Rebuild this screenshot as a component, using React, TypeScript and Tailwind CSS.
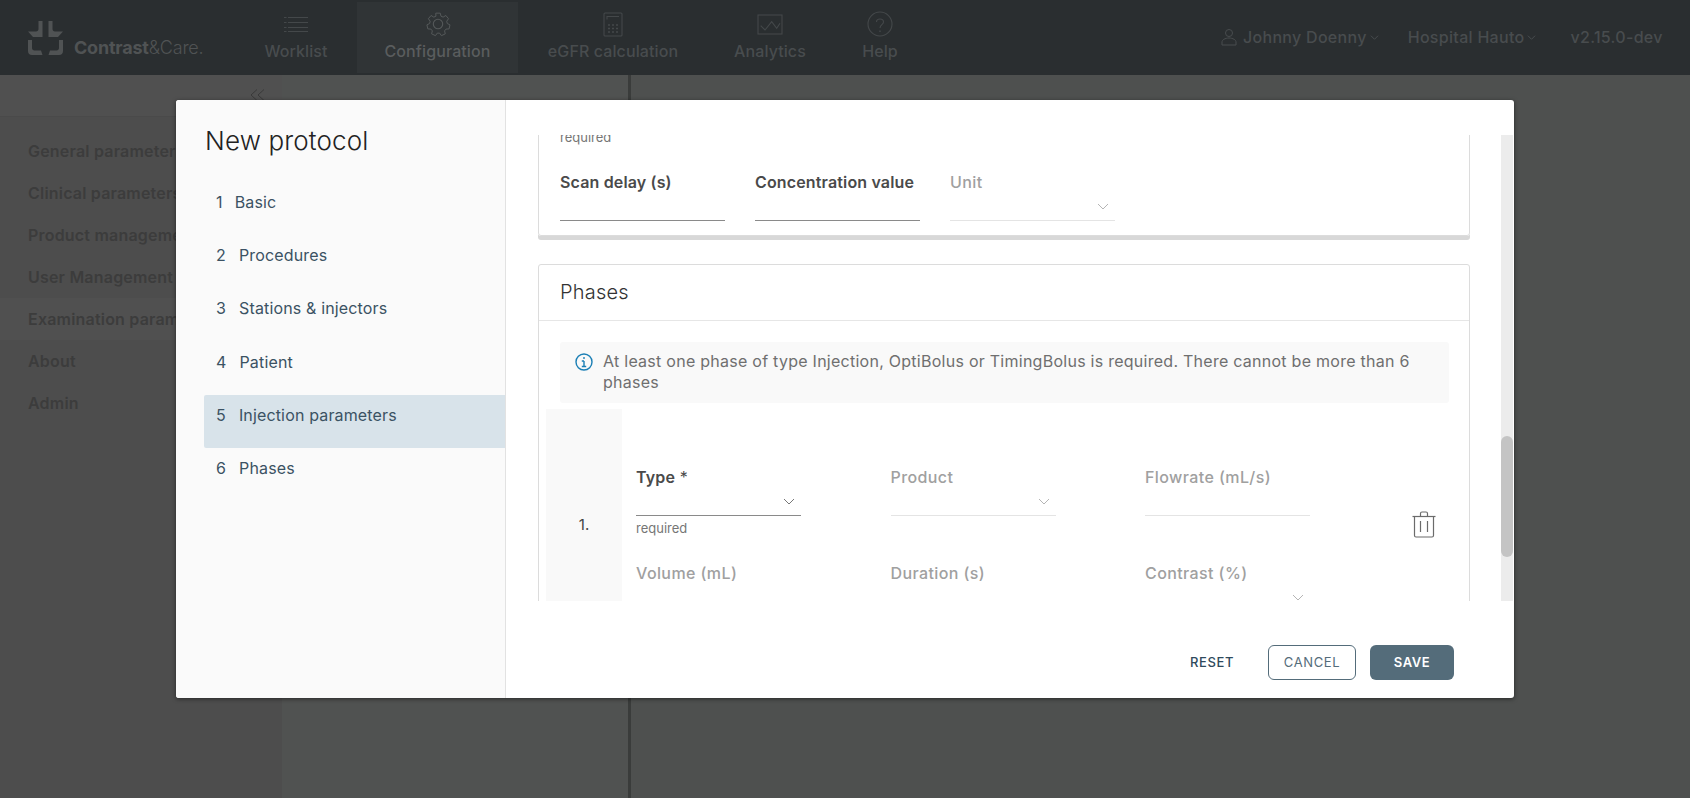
import React from "react";

const font = "font-['Inter','Liberation_Sans',sans-serif]";

const sideItems = [
  "General parameters",
  "Clinical parameters",
  "Product management",
  "User Management",
  "Examination parameters",
  "About",
  "Admin",
];

const steps = [
  { n: 1, label: "Basic", gap: "ml-[12px]", pad: "pt-[9px]" },
  { n: 2, label: "Procedures", gap: "ml-[13px]", pad: "pt-[9px]" },
  { n: 3, label: "Stations & injectors", gap: "ml-[13px]", pad: "pt-[9px]" },
  { n: 4, label: "Patient", gap: "ml-[13px]", pad: "pt-[10px]" },
  { n: 5, label: "Injection parameters", gap: "ml-[13px]", pad: "pt-[10px]", active: true },
  { n: 6, label: "Phases", gap: "ml-[13px]", pad: "pt-[10px]" },
];

function Chevron({ className }: { className?: string }) {
  return (
    <svg viewBox="0 0 12 7" className={className} fill="none" stroke="currentColor" strokeWidth="1">
      <path d="M1 1l5 5 5-5" />
    </svg>
  );
}

function LogoMark() {
  return (
    <svg viewBox="0 0 35 34" className="w-[35px] h-[34px] shrink-0" fill="#505354">
      <path d="M10.500 0h4v16H5L0 10.500h8c1.500 0 2.500-1 2.500-2.500z" />
      <path d="M24.500 0h-4v16H30l5-5.500h-8c-1.500 0-2.500-1-2.500-2.500z" />
      <path d="M0 19h4v8c0 1.500 1 2.500 2.500 2.500H13l1.500 4.500H4c-2.500 0-4-1.500-4-4z" />
      <path d="M35 19h-4v8c0 1.500-1 2.500-2.500 2.500H22L20.500 34H31c2.500 0 4-1.500 4-4z" />
    </svg>
  );
}

function NavIcon({ name }: { name: string }) {
  const cls = "w-[28px] h-[26px]";
  if (name === "list")
    return (
      <svg viewBox="0 0 28 26" className={cls} fill="none" stroke="#44484a" strokeWidth="1.200">
        <path d="M2 6.500h2.500M6 6.500h20M2 11.500h2.500M6 11.500h20M2 16.500h2.500M6 16.500h20M2 20.500h2.500M6 20.500h20" />
      </svg>
    );
  if (name === "cog")
    return (
      <svg viewBox="0 0 28 26" className={cls} fill="none" stroke="#55595a" strokeWidth="1.100">
        <path d="M11.500 1.500h5l.8 3.400 2.400 1 3-1.800 3 3.600-2 2.800.6 2.500 3 1.500-1 4.500-3.400.2-1.600 2 .8 3.300-4.300 2-2-2.800h-2.600l-2 2.800-4.300-2 .8-3.300-1.600-2-3.400-.2-1-4.500 3-1.500.6-2.500-2-2.800 3-3.600 3 1.800 2.400-1z" transform="translate(1.400 0.800) scale(0.9)" />
        <circle cx="14" cy="13" r="4.700" />
      </svg>
    );
  if (name === "calc")
    return (
      <svg viewBox="0 0 28 26" className={cls} fill="none" stroke="#44484a" strokeWidth="1.100">
        <rect x="5" y="2" width="18" height="23" rx="1" />
        <path d="M8 8.500V5.500h12" />
        <path d="M9 14h2M13 14h2M17 14h2M9 17.500h2M13 17.500h2M17 17.500h2M9 21h2M13 21h2M17 21h2" strokeWidth="1.500" />
      </svg>
    );
  if (name === "chart")
    return (
      <svg viewBox="0 0 28 26" className={cls} fill="none" stroke="#44484a" strokeWidth="1.100">
        <rect x="2" y="4" width="24" height="19" />
        <path d="M4.700 14.700L9 19l6.700-8.300 5 6.600 3.300-5" />
      </svg>
    );
  return (
    <svg viewBox="0 0 28 26" className={cls} fill="none" stroke="#44484a" strokeWidth="1.100">
      <circle cx="14" cy="13" r="12" />
      <path d="M10.500 11c0-1.800 1.500-3 3.500-3s3.500 1.200 3.500 3c0 2.600-3.500 2.800-3.500 6" />
      <path d="M14 19.500v1.500" strokeWidth="1.400" />
    </svg>
  );
}

function NavTab({ icon, label, active, className }: { icon: string; label: string; active?: boolean; className: string }) {
  return (
    <div className={`flex flex-col items-center pt-[9px] h-[71px] mt-[2px] ${className} ${active ? "bg-[#303436] text-[#5a5d5e]" : "text-[#484c4e]"}`}>
      <NavIcon name={icon} />
      <span className="text-[16px] leading-[20px] font-medium tracking-[0.1px] mt-[4px] whitespace-nowrap">{label}</span>
    </div>
  );
}

function Header() {
  return (
    <header className="h-[75px] bg-[#2a2e30] flex shrink-0">
      <div className="flex items-end pl-[28px] pb-[20px] w-[250px] shrink-0">
        <LogoMark />
        <span className="ml-[11px] -mb-[2px] text-[18px] leading-[18px] tracking-[-0.2px] text-[#505354] whitespace-nowrap">
          <span className="font-bold">Contrast</span>
          <span className="font-light">&amp;Care.</span>
        </span>
      </div>
      <NavTab icon="list" label="Worklist" className="w-[92px]" />
      <NavTab icon="cog" label="Configuration" active className="w-[161px] ml-[15px]" />
      <NavTab icon="calc" label="eGFR calculation" className="w-[190px]" />
      <NavTab icon="chart" label="Analytics" className="w-[124px]" />
      <NavTab icon="help" label="Help" className="w-[96px]" />
      <div className="flex-1 flex items-center pl-[293px] pb-[1px] text-[16px] font-medium tracking-[0.3px] text-[#484c4e] whitespace-nowrap">
        <svg viewBox="0 0 16 18" className="w-[16px] h-[18px]" fill="none" stroke="#484c4e" strokeWidth="1">
          <circle cx="8" cy="5" r="3.500" />
          <path d="M1 17v-3c0-2 3-4 7-4s7 2 7 4v3z" />
        </svg>
        <span className="ml-[6px]">Johnny Doenny</span>
        <Chevron className="w-[9px] h-[5px] ml-[3px] text-[#55595b]" />
        <span className="ml-[29px]">Hospital Hauto</span>
        <Chevron className="w-[9px] h-[5px] ml-[2px] text-[#55595b]" />
        <span className="ml-[35px]">v2.15.0-dev</span>
      </div>
    </header>
  );
}

function Field({ label, disabled, select, helper, mark }: { label: string; disabled?: boolean; select?: boolean; helper?: string; mark?: boolean }) {
  return (
    <div className="w-[165px]">
      <div className={`h-5 text-[16px] leading-5 whitespace-nowrap ${disabled ? "font-medium tracking-[0.4px] text-[#a0a0a0]" : "font-semibold tracking-[0.15px] text-[#4a4a4a]"}`}>
        {label}
        {mark && <span className="font-normal"> *</span>}
      </div>
      <div className={`h-[29px] border-b flex items-center justify-end pr-[6px] ${disabled ? "border-[#e4e4e4] text-[#b5b5b5]" : "border-[#8a8a8a] text-[#777]"}`}>
        {select && <Chevron className="w-[12px] h-[7px]" />}
      </div>
      {helper && <div className="mt-[4px] h-4 text-[13px] leading-4 text-[#767676]">{helper}</div>}
    </div>
  );
}

function TrashIcon() {
  return (
    <svg viewBox="0 0 24 27" className="w-[24px] h-[27px]" fill="none" stroke="#6b6b6b" strokeWidth="1.200">
      <path d="M0.500 5.500h23" />
      <path d="M8.500 5V2.500c0-.8.500-1.500 1.500-1.500h4c1 0 1.500.7 1.500 1.500V5" />
      <path d="M2.500 6v18.500c0 1 .7 1.500 1.500 1.500h16c.8 0 1.500-.5 1.500-1.500V6" />
      <path d="M8.500 10v11M15.500 10v11" />
    </svg>
  );
}

function Modal() {
  return (
    <div className="absolute left-[176px] top-[100px] w-[1338px] h-[598px] bg-white rounded-[3px] shadow-[0_1px_4px_rgba(0,0,0,0.5)] flex overflow-hidden">
      {/* Steps */}
      <div className="w-[330px] shrink-0 bg-[#fafafa] border-r border-[#e2e2e2] pl-[28px]">
        <h2 className="pt-[25px] pl-[1px] text-[26px] leading-[32px] font-light tracking-[0.15px] text-[#222] whitespace-nowrap">New protocol</h2>
        <div className="mt-[26px]">
          {steps.map((s) => (
            <div
              key={s.n}
              className={`h-[53px] pl-[12px] ${s.pad} text-[16px] leading-[20px] tracking-[0.15px] text-[#3b5263] rounded-l-[2px] ${s.active ? "bg-[#d8e3ea]" : ""}`}
            >
              {s.n}
              <span className={s.gap}>{s.label}</span>
            </div>
          ))}
        </div>
      </div>

      {/* Form */}
      <div className="flex-1 flex flex-col min-w-0">
        <div className="h-[35px] shrink-0" />
        <div className="h-[466px] flex overflow-hidden">
          <div className="flex-1 pl-[32px] pr-[31px] min-w-0">
            <div className="-mt-[7px] border border-[#dcdcdc] rounded-[3px] shadow-[0_4px_0_#d8d8d8] pl-[21px] pb-[14px]">
              <div className="h-4 text-[13px] leading-4 text-[#767676] mb-[27px]">required</div>
              <div className="flex gap-x-[30px]">
                <Field label="Scan delay (s)" />
                <Field label="Concentration value" />
                <Field label="Unit" disabled select />
              </div>
            </div>

            <div className="mt-[28px] border border-[#dcdcdc] rounded-[3px]">
              <div className="h-[56px] border-b border-[#e6e6e6] pl-[21px] pb-[2px] flex items-center text-[20px] font-light tracking-[0.2px] text-[#333]">Phases</div>
              <div className="ml-[21px] mr-[20px] mt-[21px] h-[61px] rounded-[3px] bg-[#f9f9f9] flex pl-[15px] pt-[9px] pr-[20px]">
                <svg viewBox="0 0 18 18" className="w-[18px] h-[18px] shrink-0 mt-[2px]" fill="none" stroke="#1b7fb5" strokeWidth="1.400">
                  <circle cx="9" cy="9" r="8" />
                  <path d="M9 8v5.500M6.800 8H9M6.800 13.500h4.400" />
                  <path d="M9 4.200v1.600" strokeWidth="1.800" />
                </svg>
                <p className="ml-[10px] text-[16px] leading-[21px] tracking-[0.26px] text-[#6f6f6f]">
                  At least one phase of type Injection, OptiBolus or TimingBolus is required. There cannot be more than 6 phases
                </p>
              </div>
              <div className="mt-[6px] flex items-stretch h-[300px]">
                <div className="ml-[7px] w-[76px] shrink-0 bg-[#f9f9f9] flex justify-center pt-[106px] text-[15px] leading-5 text-[#444]">1.</div>
                <div className="ml-[14px] pt-[58px] grid grid-cols-[165px_165px_165px] gap-x-[89.500px] auto-rows-[96px]">
                  <Field label="Type" mark select helper="required" />
                  <Field label="Product" disabled select />
                  <Field label="Flowrate (mL/s)" disabled />
                  <Field label="Volume (mL)" disabled />
                  <Field label="Duration (s)" disabled />
                  <Field label="Contrast (%)" disabled select />
                </div>
                <div className="ml-[102px] pt-[102px]">
                  <TrashIcon />
                </div>
              </div>
            </div>
          </div>
          {/* Scrollbar */}
          <div className="w-[12px] shrink-0 mr-[1px] bg-[#ececec] pt-[301px]">
            <div className="h-[121px] rounded-[6px] bg-[#c4c4c4]" />
          </div>
        </div>
        <div className="flex-1 flex items-start justify-end pr-[60px] pt-[44px]">
          <button className="text-[13px] leading-[35px] font-medium tracking-[0.6px] text-[#2f4a5c] mr-[34px]">RESET</button>
          <button className="w-[88px] h-[35px] pt-[1px] rounded-[6px] border border-[#546c7a] text-[13px] tracking-[0.6px] text-[#546c7a]">CANCEL</button>
          <button className="w-[84px] h-[35px] ml-[14px] rounded-[6px] bg-[#546c7a] text-[13px] font-semibold tracking-[0.6px] text-white">SAVE</button>
        </div>
      </div>
    </div>
  );
}

export default function App() {
  return (
    <div className={`relative w-[1690px] h-[798px] overflow-hidden flex flex-col bg-[#4e504f] ${font}`}>
      <Header />
      <div className="flex-1 flex min-h-0">
        {/* Sidebar behind dialog */}
        <aside className="w-[282px] shrink-0 bg-[#4d4d4d]">
          <div className="h-[42px] bg-[#505050] border-b border-[#4a4a4a] flex justify-end items-start pt-[14px] pr-[17px]">
            <svg viewBox="0 0 15 12" className="w-[15px] h-[12px]" fill="none" stroke="#3a3a3a" strokeWidth="1">
              <path d="M7 0.500L1 6l6 5.500M14 0.500L8 6l6 5.500" />
            </svg>
          </div>
          <nav className="pt-[13px]">
            {sideItems.map((item, i) => (
              <div
                key={item}
                className={`h-[42px] pl-[28px] flex items-center text-[16px] font-semibold tracking-[0.2px] text-[#3c3c3c] whitespace-nowrap ${i === 4 ? "bg-[#505050]" : ""}`}
              >
                {item}
              </div>
            ))}
          </nav>
        </aside>
        <div className="w-[346px] shrink-0 bg-[#505251]" />
        <div className="w-[3px] shrink-0 bg-[#3a3c3b]" />
        <div className="flex-1" />
      </div>
      <Modal />
    </div>
  );
}
